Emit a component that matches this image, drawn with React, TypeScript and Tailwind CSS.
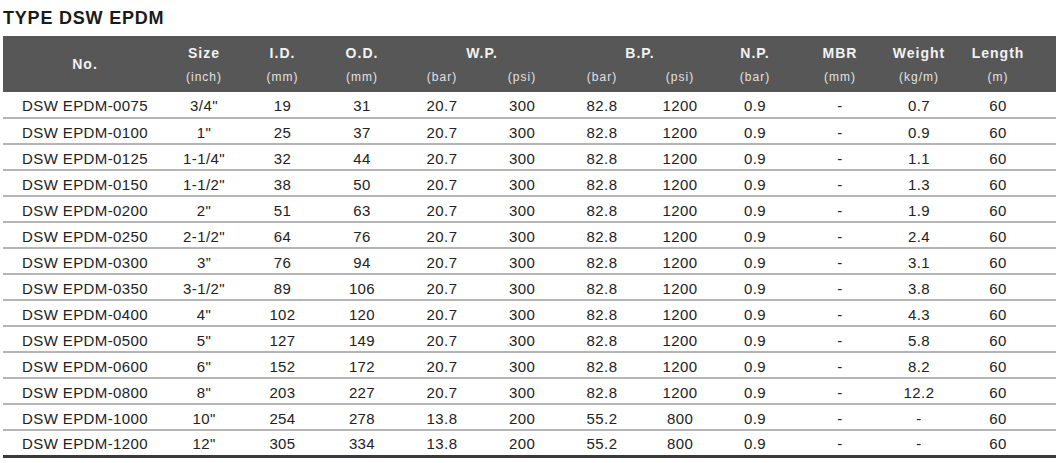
const rows = [
  ["DSW EPDM-0075", '3/4"', "19", "31", "20.7", "300", "82.8", "1200", "0.9", "-", "0.7", "60"],
  ["DSW EPDM-0100", '1"', "25", "37", "20.7", "300", "82.8", "1200", "0.9", "-", "0.9", "60"],
  ["DSW EPDM-0125", '1-1/4"', "32", "44", "20.7", "300", "82.8", "1200", "0.9", "-", "1.1", "60"],
  ["DSW EPDM-0150", '1-1/2"', "38", "50", "20.7", "300", "82.8", "1200", "0.9", "-", "1.3", "60"],
  ["DSW EPDM-0200", '2"', "51", "63", "20.7", "300", "82.8", "1200", "0.9", "-", "1.9", "60"],
  ["DSW EPDM-0250", '2-1/2"', "64", "76", "20.7", "300", "82.8", "1200", "0.9", "-", "2.4", "60"],
  ["DSW EPDM-0300", "3\u201d", "76", "94", "20.7", "300", "82.8", "1200", "0.9", "-", "3.1", "60"],
  ["DSW EPDM-0350", '3-1/2"', "89", "106", "20.7", "300", "82.8", "1200", "0.9", "-", "3.8", "60"],
  ["DSW EPDM-0400", '4"', "102", "120", "20.7", "300", "82.8", "1200", "0.9", "-", "4.3", "60"],
  ["DSW EPDM-0500", '5"', "127", "149", "20.7", "300", "82.8", "1200", "0.9", "-", "5.8", "60"],
  ["DSW EPDM-0600", '6"', "152", "172", "20.7", "300", "82.8", "1200", "0.9", "-", "8.2", "60"],
  ["DSW EPDM-0800", '8"', "203", "227", "20.7", "300", "82.8", "1200", "0.9", "-", "12.2", "60"],
  ["DSW EPDM-1000", '10"', "254", "278", "13.8", "200", "55.2", "800", "0.9", "-", "-", "60"],
  ["DSW EPDM-1200", '12"', "305", "334", "13.8", "200", "55.2", "800", "0.9", "-", "-", "60"],
];

const widths = ["w-[162px]", "w-[78px]", "w-[79px]", "w-[80px]", "w-[80px]", "w-[80px]", "w-[80px]", "w-[76px]", "w-[74px]", "w-[96px]", "w-[62px]", "w-[96px]", "w-[10px]"];

const units = ["(inch)", "(mm)", "(mm)", "(bar)", "(psi)", "(bar)", "(psi)", "(bar)", "(mm)", "(kg/m)", "(m)"];

export default function App() {
  return (
    <div className="h-[463px] w-[1059px] overflow-hidden bg-white pt-[8px] font-['Liberation_Sans',Arial,sans-serif]">
      <h1 className="pl-[3px] text-[18px] font-bold leading-[20px] tracking-[0.8px] text-[#1a1a1a]">
        TYPE DSW EPDM
      </h1>

      <table className="ml-[3px] mt-[8px] w-[1053px] table-fixed border-collapse">
        <colgroup>
          {widths.map((w, i) => (
            <col key={i} className={w} />
          ))}
        </colgroup>
        <thead className="bg-[#575757] text-[#f2f2f2]">
          <tr className="h-[33px] align-bottom text-[14px] font-bold tracking-[1px]">
            <th rowSpan={2} className="pl-[2px] align-middle">
              No.
            </th>
            <th className="pb-[5px]">Size</th>
            <th className="pb-[5px]">I.D.</th>
            <th className="pb-[5px]">O.D.</th>
            <th colSpan={2} className="pb-[5px]">W.P.</th>
            <th colSpan={2} className="pb-[5px]">B.P.</th>
            <th className="pb-[5px]">N.P.</th>
            <th className="pb-[5px]">MBR</th>
            <th className="pb-[5px]">Weight</th>
            <th className="pb-[5px]">Length</th>
            <th />
          </tr>
          <tr className="h-[23px] align-top text-[12px] leading-[16px] tracking-[1px] text-[#e2e2e2]">
            {units.map((u, i) => (
              <th key={i} className="font-normal">
                {u}
              </th>
            ))}
            <th />
          </tr>
        </thead>
        <tbody className="text-[15px] tracking-[0.4px] text-[#222]">
          {rows.map((r, i) => (
            <tr
              key={r[0]}
              className={`h-[26px] ${i === rows.length - 1 ? "border-b-[3px] border-[#3a3a3a]" : "border-b-2 border-[#b4b4b4]"}`}
            >
              {r.map((c, j) => (
                <td key={j} className={`pt-[3px] leading-[20px] ${j === 0 ? "pl-[19px] text-left" : "text-center"}`}>
                  {c}
                </td>
              ))}
              <td />
            </tr>
          ))}
        </tbody>
      </table>
    </div>
  );
}
